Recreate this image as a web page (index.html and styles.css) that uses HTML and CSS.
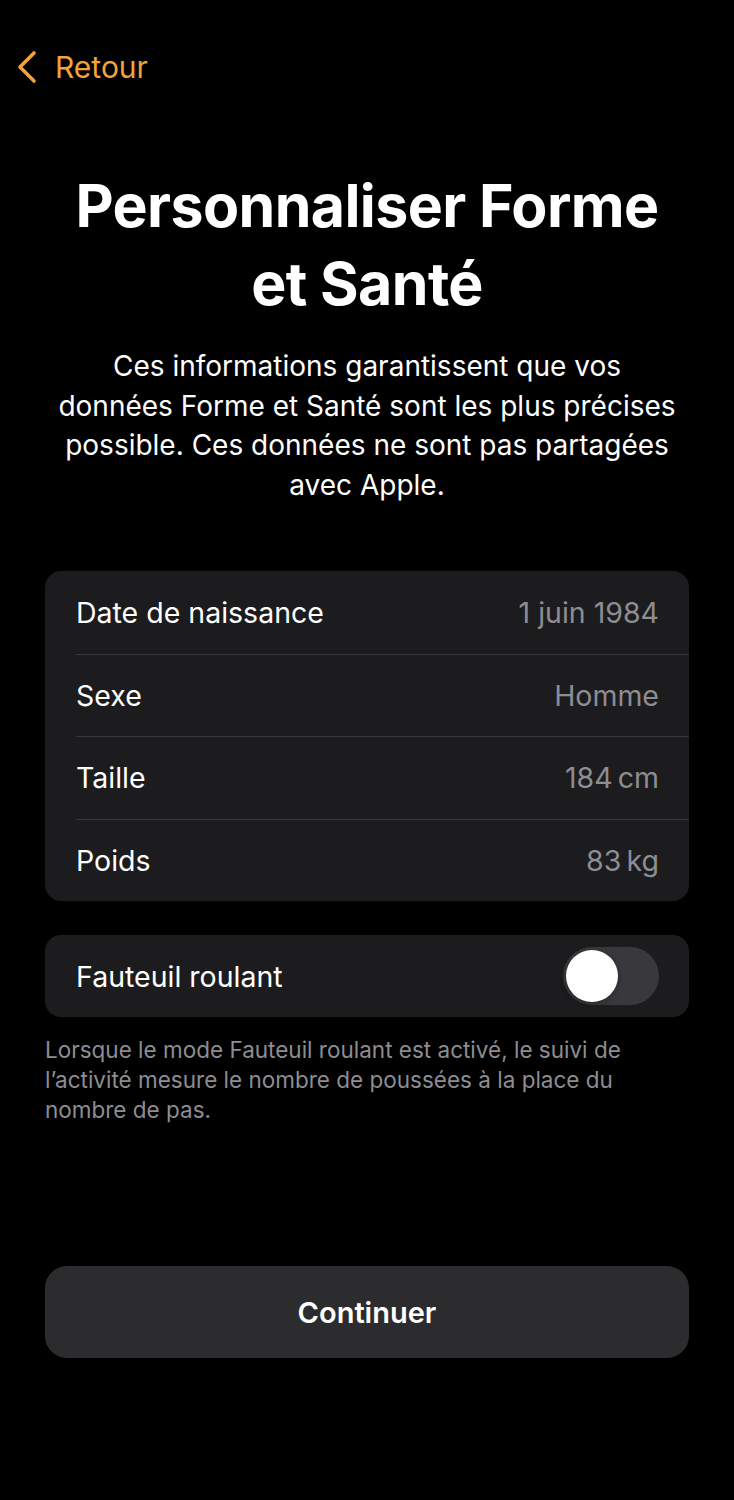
FILE: index.html
```html
<!DOCTYPE html>
<html lang="fr">
<head>
<meta charset="utf-8">
<title>Personnaliser Forme et Santé</title>
<link rel="stylesheet" href="styles.css">
</head>
<body>
<div class="screen">
  <nav class="nav">
    <a class="back" href="#">
      <svg class="chev" width="22" height="34" viewBox="0 0 22 34"><path d="M18 3 L4 17 L18 31" fill="none" stroke="#f2a33a" stroke-width="3.6" stroke-linecap="round" stroke-linejoin="round"/></svg>
      <span>Retour</span>
    </a>
  </nav>
  <h1 class="title">Personnaliser Forme<br>et Santé</h1>
  <p class="intro">Ces informations garantissent que vos<br>données Forme et Santé sont les plus précises<br>possible. Ces données ne sont pas partagées<br>avec Apple.</p>

  <div class="group">
    <div class="row"><span class="label">Date de naissance</span><span class="value">1 juin 1984</span></div>
    <div class="row"><span class="label">Sexe</span><span class="value">Homme</span></div>
    <div class="row"><span class="label">Taille</span><span class="value">184&#8239;cm</span></div>
    <div class="row"><span class="label">Poids</span><span class="value">83&#8239;kg</span></div>
  </div>

  <div class="group toggle-group">
    <div class="row"><span class="label">Fauteuil roulant</span><span class="switch"><span class="knob"></span></span></div>
  </div>
  <p class="footnote">Lorsque le mode Fauteuil roulant est activé, le suivi de l’activité mesure le nombre de poussées à la place du nombre de pas.</p>

  <button class="cta">Continuer</button>
</div>
</body>
</html>
```
FILE: styles.css
```css
html, body {
  margin: 0;
  padding: 0;
  background: #000;
}
body {
  font-family: Inter, "Noto Sans", sans-serif;
  color: #fff;
  -webkit-font-smoothing: antialiased;
}
.screen {
  width: 734px;
  min-height: 1500px;
  box-sizing: border-box;
  padding: 0 45px 0 45px;
  display: flex;
  flex-direction: column;
}
.nav {
  height: 136px;
  margin-left: -29px;
  padding-top: 47px;
  box-sizing: border-box;
}
.back {
  display: inline-flex;
  align-items: center;
  gap: 17px;
  color: #f2a33a;
  text-decoration: none;
  font-size: 30px;
  line-height: 40px;
}
.chev { display: block; }
.title {
  margin: 31px 0 0;
  text-align: center;
  font-size: 59px;
  line-height: 78px;
  font-weight: 700;
  letter-spacing: -0.6px;
}
.intro {
  margin: 24px -10px 0;
  text-align: center;
  font-size: 28px;
  line-height: 39.5px;
  color: #fff;
  white-space: nowrap;
}
.group {
  margin-top: 66px;
  background: #1c1c1e;
  border-radius: 16px;
  overflow: hidden;
}
.row {
  height: 82.5px;
  margin-left: 31px;
  padding-right: 30px;
  display: flex;
  align-items: center;
  justify-content: space-between;
  font-size: 28.5px;
  border-top: 1px solid #38383a;
  box-sizing: border-box;
}
.row:first-child { border-top: none; }
.value { color: #8d8d92; }
.toggle-group { margin-top: 34px; }
.toggle-group .row { height: 82px; }
.switch {
  width: 96px;
  height: 58px;
  border-radius: 29px;
  background: #39393d;
  display: flex;
  align-items: center;
  padding: 3px;
  box-sizing: border-box;
}
.knob {
  width: 52px;
  height: 52px;
  border-radius: 50%;
  background: #fff;
  box-shadow: 0 2px 6px rgba(0,0,0,0.3);
}
.footnote {
  margin: 18px 0 0;
  font-size: 22.5px;
  line-height: 30px;
  color: #8d8d92;
}
.cta {
  margin-top: 141px;
  height: 92px;
  border: none;
  border-radius: 22px;
  background: #2c2c2e;
  color: #fff;
  font-family: inherit;
  font-size: 29px;
  font-weight: 600;
}
```
